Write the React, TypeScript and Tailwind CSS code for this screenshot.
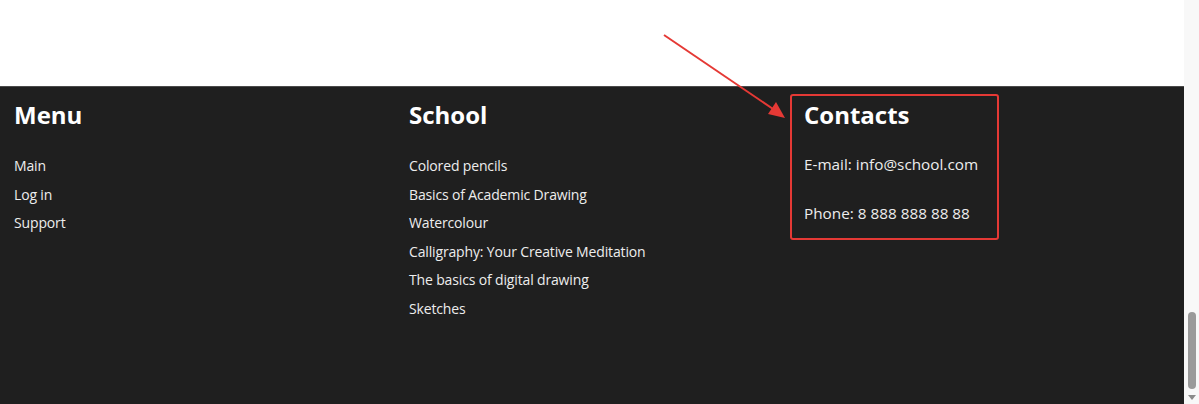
import { ReactNode } from "react";

const menu = ["Main", "Log in", "Support"];
const school = [
  "Colored pencils",
  "Basics of Academic Drawing",
  "Watercolour",
  "Calligraphy: Your Creative Meditation",
  "The basics of digital drawing",
  "Sketches",
];

function Column({ title, children }: { title: string; children: ReactNode }) {
  return (
    <div className="relative">
      <h2 className="text-[24px] leading-[30px] font-bold text-white">{title}</h2>
      {children}
    </div>
  );
}

export default function App() {
  return (
    <div className="relative flex h-[404px] w-[1199px] overflow-hidden bg-white font-['Open_Sans',sans-serif]">
      <div className="flex flex-1 flex-col">
        <div className="h-[86px] bg-white" />
        <footer className="flex-1 border-t border-[#4a4a4a] bg-[#1f1f1f] pl-[14px] pt-[13px]">
          <div className="grid grid-cols-[395px_395px_1fr]">
            <Column title="Menu">
              <ul className="mt-[22px] text-[14px] leading-[28.5px] tracking-[-0.15px] text-[#ededed]">
                {menu.map((m) => (
                  <li key={m}>{m}</li>
                ))}
              </ul>
            </Column>
            <Column title="School">
              <ul className="mt-[22px] text-[14px] leading-[28.5px] tracking-[-0.15px] text-[#ededed]">
                {school.map((s) => (
                  <li key={s}>{s}</li>
                ))}
              </ul>
            </Column>
            <Column title="Contacts">
              <div className="mt-[22px] space-y-[25px] text-[15.3px] leading-[24px] text-[#ededed]">
                <p>E-mail: info@school.com</p>
                <p>Phone: 8 888 888 88 88</p>
              </div>
              <div className="pointer-events-none absolute -left-[14px] -top-[6px] h-[146px] w-[209px] rounded-[3px] border-[2.5px] border-[#e53935]" />
            </Column>
          </div>
        </footer>
      </div>
      <div className="flex w-[15px] flex-col items-center justify-end bg-[#f8f8f8] pb-[3px]">
        <div className="h-[77px] w-[8px] rounded-full bg-[#9a9a9a]" />
        <svg width="8" height="6" viewBox="0 0 8 6" className="mt-[6px]">
          <path d="M0 0h8L4 5z" fill="#8a8a8a" />
        </svg>
      </div>
      <svg
        className="pointer-events-none absolute left-0 top-0"
        width="1199"
        height="404"
        viewBox="0 0 1199 404"
      >
        <line x1="664" y1="35" x2="776" y2="111" stroke="#e53935" strokeWidth="2" />
        <path d="M785 118 L768 114 L776 102 Z" fill="#e53935" />
      </svg>
    </div>
  );
}
